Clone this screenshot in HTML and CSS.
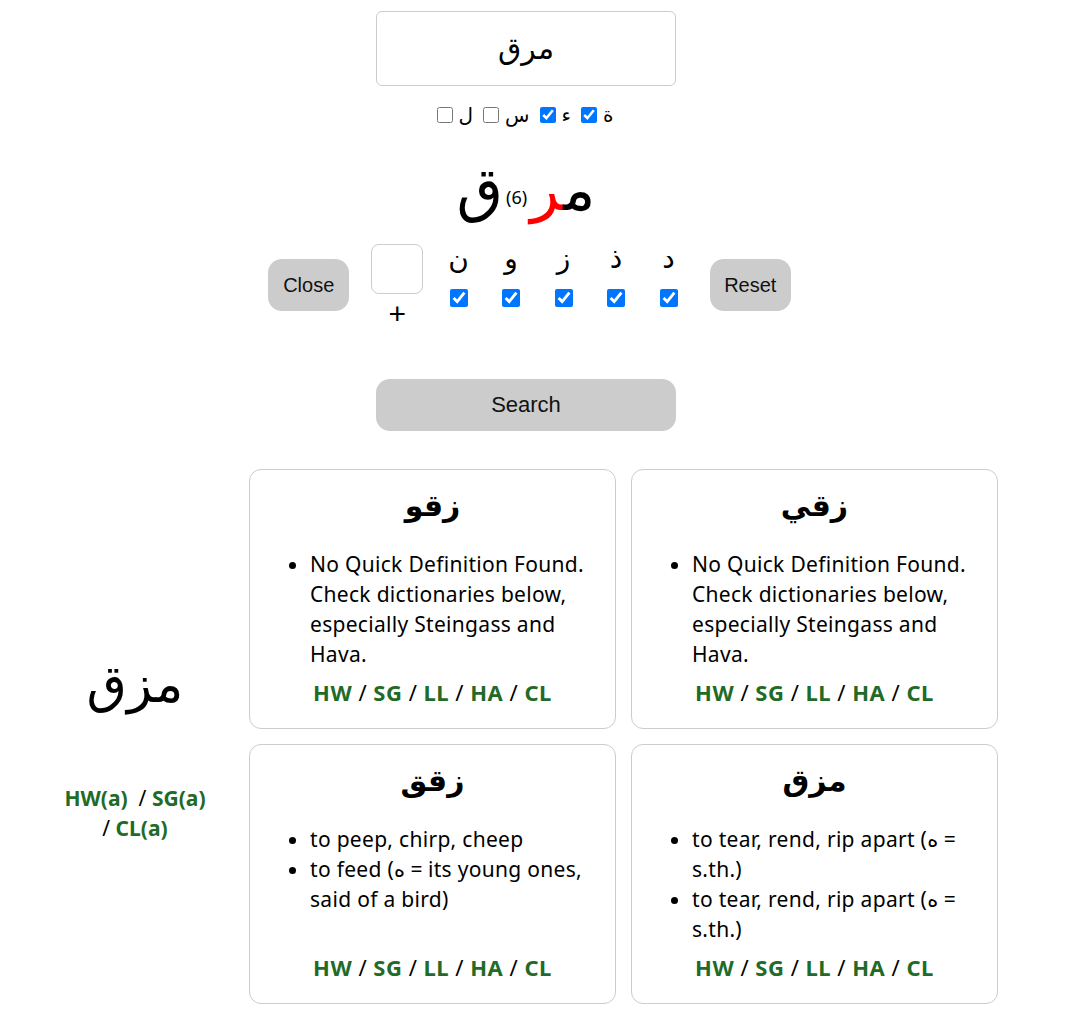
FILE: index.html
```html
<!DOCTYPE html>
<html lang="ar">
<head>
<meta charset="utf-8">
<title>Root search</title>
<link rel="stylesheet" href="styles.css">
</head>
<body>
<div class="page">
  <div class="top">
    <input class="root-input" type="text" value="مرق" dir="rtl">
    <div class="options">
      <label class="opt"><input type="checkbox" class="cb-small"><span>ل</span></label>
      <label class="opt"><input type="checkbox" class="cb-small"><span>س</span></label>
      <label class="opt"><input type="checkbox" class="cb-small" checked><span>ء</span></label>
      <label class="opt"><input type="checkbox" class="cb-small" checked><span>ة</span></label>
    </div>
    <div class="root-display" dir="rtl"><span>م</span><span class="red">ر</span><span class="count">(6)</span><span>ق</span></div>
    <div class="controls">
      <button class="btn btn-side">Close</button>
      <div class="add-col">
        <input class="add-box" type="text">
        <div class="plus">+</div>
      </div>
      <div class="letters">
        <label class="letter-col"><span class="letter">ن</span><input type="checkbox" class="cb-big" checked></label>
        <label class="letter-col"><span class="letter">و</span><input type="checkbox" class="cb-big" checked></label>
        <label class="letter-col"><span class="letter">ز</span><input type="checkbox" class="cb-big" checked></label>
        <label class="letter-col"><span class="letter">ذ</span><input type="checkbox" class="cb-big" checked></label>
        <label class="letter-col"><span class="letter">د</span><input type="checkbox" class="cb-big" checked></label>
      </div>
      <button class="btn btn-side btn-reset">Reset</button>
    </div>
    <button class="btn btn-search">Search</button>
  </div>

  <div class="results">
    <div class="main-root">
      <div class="main-word">مزق</div>
      <div class="main-links"><a href="#">HW(a)</a>&nbsp; / <a href="#">SG(a)</a> / <a href="#">CL(a)</a></div>
    </div>
    <div class="cards">
      <div class="card">
        <h2 class="card-title">زقو</h2>
        <ul class="defs">
          <li>No Quick Definition Found. Check dictionaries below, especially Steingass and Hava.</li>
        </ul>
        <div class="dict-links"><a href="#">HW</a> / <a href="#">SG</a> / <a href="#">LL</a> / <a href="#">HA</a> / <a href="#">CL</a></div>
      </div>
      <div class="card">
        <h2 class="card-title">زقي</h2>
        <ul class="defs">
          <li>No Quick Definition Found. Check dictionaries below, especially Steingass and Hava.</li>
        </ul>
        <div class="dict-links"><a href="#">HW</a> / <a href="#">SG</a> / <a href="#">LL</a> / <a href="#">HA</a> / <a href="#">CL</a></div>
      </div>
      <div class="card">
        <h2 class="card-title">زقق</h2>
        <ul class="defs">
          <li>to peep, chirp, cheep</li>
          <li>to feed (ه = its young ones, said of a bird)</li>
        </ul>
        <div class="dict-links"><a href="#">HW</a> / <a href="#">SG</a> / <a href="#">LL</a> / <a href="#">HA</a> / <a href="#">CL</a></div>
      </div>
      <div class="card">
        <h2 class="card-title">مزق</h2>
        <ul class="defs">
          <li>to tear, rend, rip apart (ه = s.th.)</li>
          <li>to tear, rend, rip apart (ه = s.th.)</li>
        </ul>
        <div class="dict-links"><a href="#">HW</a> / <a href="#">SG</a> / <a href="#">LL</a> / <a href="#">HA</a> / <a href="#">CL</a></div>
      </div>
    </div>
  </div>
</div>
</body>
</html>
```

FILE: styles.css
```css
html, body {
  margin: 0;
  padding: 0;
  background: #fff;
}

body {
  margin: 8px;
  font-family: "Noto Sans", "DejaVu Sans", sans-serif;
  color: #000;
}

.page {
  width: 1036px;
}

.top {
  display: flex;
  flex-direction: column;
  align-items: center;
}

.root-input {
  box-sizing: border-box;
  width: 300px;
  height: 75px;
  margin-top: 3px;
  border: 1px solid #ccc;
  border-radius: 6px;
  font-family: "DejaVu Sans", sans-serif;
  font-size: 30px;
  text-align: center;
  color: #000;
  outline: none;
}

.options {
  display: flex;
  align-items: center;
  margin-top: 17px;
  height: 24px;
  font-family: "DejaVu Sans", sans-serif;
  font-size: 20px;
}

.opt {
  display: flex;
  align-items: center;
}

.opt span {
  margin: 0 6px 0 3px;
  line-height: 24px;
}

.cb-small {
  width: 16px;
  height: 16px;
  margin: 0 3px 0 4px;
  accent-color: #0075ff;
}

.root-display {
  margin-top: 24px;
  height: 76px;
  line-height: 76px;
  font-family: "DejaVu Sans", sans-serif;
  font-size: 60px;
  white-space: nowrap;
}

.root-display .red {
  color: #ff0000;
}

.root-display .count {
  font-family: "Noto Sans", sans-serif;
  font-size: 18px;
  margin: 0 3px;
  vertical-align: 6px;
}

.controls {
  display: flex;
  align-items: flex-start;
  margin-top: 17px;
  padding-left: 7px;
}

.btn {
  border: none;
  background: #cccccc;
  font-family: "Liberation Sans", Arial, sans-serif;
  font-size: 20px;
  color: #111;
  cursor: pointer;
}

.btn-side {
  width: 81px;
  height: 52px;
  border-radius: 14px;
  margin-top: 15px;
}

.add-col {
  display: flex;
  flex-direction: column;
  align-items: center;
  margin-left: 22px;
}

.add-box {
  box-sizing: border-box;
  width: 52px;
  height: 50px;
  border: 1px solid #ccc;
  border-radius: 8px;
  outline: none;
}

.plus {
  font-family: "Liberation Sans", Arial, sans-serif;
  font-size: 30px;
  line-height: 30px;
  margin-top: 5px;
}

.letters {
  display: flex;
  margin-left: 9px;
}

.letter-col {
  width: 52.5px;
  display: flex;
  flex-direction: column;
  align-items: center;
}

.letter {
  font-family: "DejaVu Sans", sans-serif;
  font-size: 28px;
  line-height: 30px;
}

.cb-big {
  width: 18px;
  height: 18px;
  margin: 15px 0 0 0;
  accent-color: #0075ff;
}

.btn-reset {
  margin-left: 15px;
}

.btn-search {
  width: 300px;
  height: 52px;
  border-radius: 14px;
  margin-top: 50px;
  font-size: 22px;
}

.results {
  display: flex;
  margin-top: 38px;
  margin-left: 52px;
}

.main-root {
  width: 150px;
  margin-right: 39px;
  align-self: center;
  padding-top: 24px;
  text-align: center;
}

.main-word {
  font-family: "DejaVu Sans", sans-serif;
  font-size: 52px;
  line-height: 60px;
}

.main-links {
  margin-top: 69px;
  font-size: 21px;
  line-height: 30px;
}

a {
  color: #1f6b27;
  font-weight: bold;
  text-decoration: none;
}

.cards {
  display: grid;
  grid-template-columns: 367px 367px;
  column-gap: 15px;
  row-gap: 15px;
}

.card {
  display: flex;
  flex-direction: column;
  border: 1px solid #cccccc;
  border-radius: 12px;
  padding: 18px 20px 21px 20px;
}

.card-title {
  margin: 0;
  text-align: center;
  font-family: "DejaVu Sans", sans-serif;
  font-size: 30px;
  line-height: 36px;
  font-weight: bold;
}

.defs {
  margin: 25px 0 0 0;
  padding-left: 40px;
  font-size: 21px;
  line-height: 30px;
  letter-spacing: 0.3px;
}

.dict-links {
  margin-top: auto;
  padding-top: 8px;
  text-align: center;
  font-size: 22px;
  line-height: 30px;
  letter-spacing: 0.5px;
}
```
